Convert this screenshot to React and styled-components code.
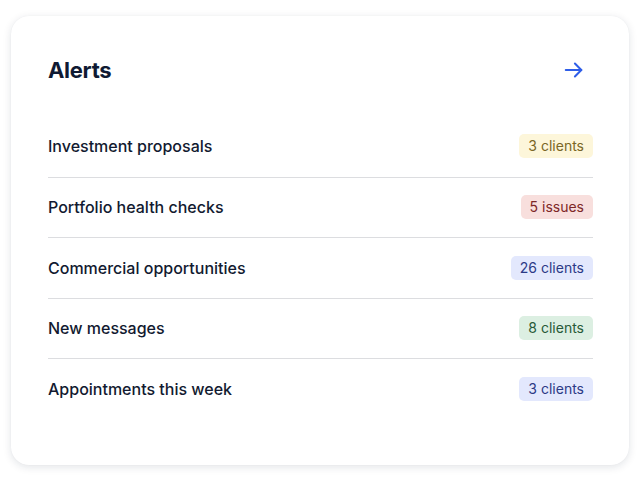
import styled, { createGlobalStyle } from "styled-components";

const GlobalStyle = createGlobalStyle`
  body {
    margin: 0;
    background: #ffffff;
    font-family: Inter, "Noto Sans", sans-serif;
  }
`;

const Page = styled.main`
  padding: 16px 11px;
`;

const Card = styled.section`
  background: #ffffff;
  border-radius: 18px;
  box-shadow: 0 2px 8px rgba(20, 30, 60, 0.12), 0 0 1px rgba(20, 30, 60, 0.08);
  padding: 40px 36px 46px 37px;
`;

const Header = styled.header`
  display: flex;
  align-items: center;
  justify-content: space-between;
  height: 28px;
  margin-bottom: 32px;
`;

const Title = styled.h1`
  margin: 0;
  font-size: 22px;
  font-weight: 700;
  color: #0f1a33;
  letter-spacing: -0.3px;
`;

const ArrowButton = styled.button`
  border: none;
  background: none;
  padding: 0;
  margin-right: 8px;
  display: flex;
  color: #2f5ee8;
  cursor: pointer;
`;

const List = styled.ul`
  list-style: none;
  margin: 0;
  padding: 0;
`;

const Row = styled.li`
  box-sizing: border-box;
  display: flex;
  align-items: center;
  justify-content: space-between;
  height: 60.5px;
  border-top: ${(p) => (p.$first ? "none" : "1px solid #dcdde0")};
`;

const Label = styled.span`
  font-size: 16px;
  font-weight: 500;
  color: #121a30;
`;

const tones = {
  yellow: { bg: "#fdf6da", fg: "#7a6626" },
  red: { bg: "#f8dfdd", fg: "#7e2727" },
  blue: { bg: "#e3e8fd", fg: "#2c3a86" },
  green: { bg: "#dcefe2", fg: "#275a38" },
};

const Badge = styled.span`
  font-size: 14px;
  line-height: 24px;
  padding: 0 9px;
  border-radius: 5px;
  background: ${(p) => tones[p.$tone].bg};
  color: ${(p) => tones[p.$tone].fg};
`;

const alerts = [
  { label: "Investment proposals", badge: "3 clients", tone: "yellow" },
  { label: "Portfolio health checks", badge: "5 issues", tone: "red" },
  { label: "Commercial opportunities", badge: "26 clients", tone: "blue" },
  { label: "New messages", badge: "8 clients", tone: "green" },
  { label: "Appointments this week", badge: "3 clients", tone: "blue" },
];

export default function App() {
  return (
    <>
      <GlobalStyle />
      <Page>
        <Card>
          <Header>
            <Title>Alerts</Title>
            <ArrowButton aria-label="See all alerts">
              <svg width="22" height="22" viewBox="0 0 24 24" fill="none" stroke="currentColor" strokeWidth="2.2" strokeLinecap="round" strokeLinejoin="round">
                <path d="M3 12h17" />
                <path d="M13 5l7 7-7 7" />
              </svg>
            </ArrowButton>
          </Header>
          <List>
            {alerts.map((a, i) => (
              <Row key={a.label} $first={i === 0}>
                <Label>{a.label}</Label>
                <Badge $tone={a.tone}>{a.badge}</Badge>
              </Row>
            ))}
          </List>
        </Card>
      </Page>
    </>
  );
}
